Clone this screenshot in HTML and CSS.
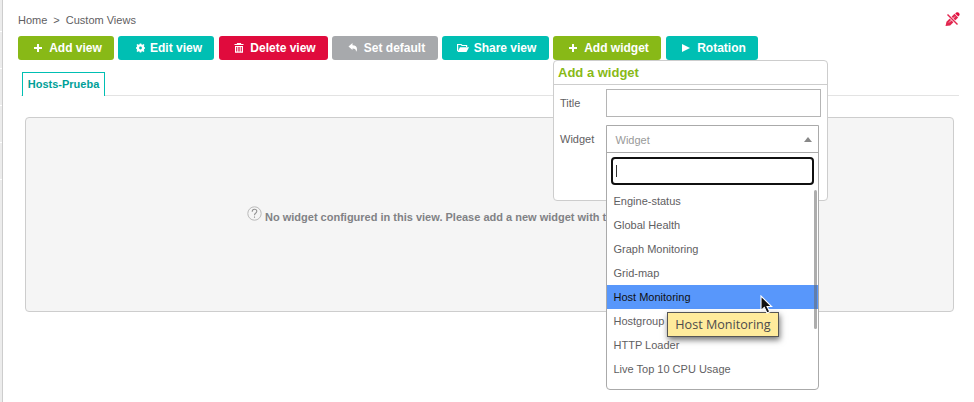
FILE: index.html
```html
<!DOCTYPE html>
<html lang="en">
<head>
<meta charset="utf-8">
<title>Custom Views</title>
<link rel="stylesheet" href="styles.css">
</head>
<body>
<div class="app">
  <aside class="rail"><i></i><i></i><i></i><i></i><i></i></aside>
  <main class="page">
    <header class="topline">
      <nav class="breadcrumb"><a>Home</a><span class="sep">&gt;</span><a>Custom Views</a></nav>
      <svg class="edit-off" viewBox="0 0 15 15" width="15" height="15"><path d="M0.500 14l1-4.200 8-8 3.700 3.700-8 8z" fill="#e2264f"/><path d="M10.200 1.400l1-1q2-.8 3 .8t-.3 2.600l-.6.6z" fill="#e00b3d"/><path d="M4 10.500l6-6" stroke="#f9b9c6" stroke-width="1"/><path d="M2.500 2.500l10 10" stroke="#fff" stroke-width="2.600"/><path d="M2.500 2.500l10 10" stroke="#e2264f" stroke-width="1.400"/></svg>
    </header>
    <div class="toolbar">
      <button class="btn green w96"><svg viewBox="0 0 14 12" width="14" height="12"><path d="M3 6h8M7 2v8" stroke="#fff" stroke-width="2"/></svg><span>Add view</span></button>
      <button class="btn teal w96"><svg viewBox="-1.500 0 14 12" width="14" height="12"><circle cx="7" cy="6" r="2.600" fill="none" stroke="#fff" stroke-width="2.400"/><path d="M7 1.500v2M7 8.500v2M2.500 6h2M9.500 6h2M3.500 2.500l1.500 1.500M9 8l1.500 1.500M3.500 9.500l1.500-1.500M9 4l1.500-1.500" stroke="#fff" stroke-width="1.600"/></svg><span>Edit view</span></button>
      <button class="btn red w109"><svg viewBox="0 0 14 12" width="14" height="12"><path d="M2.500 2.500h9M5.500 2V1.500h3V2" stroke="#fff" stroke-width="1.200" fill="none"/><path d="M3.600 4.500v5.700h6.800V4.500z" fill="none" stroke="#fff" stroke-width="1.200"/><path d="M5.800 4v6M8.200 4v6" stroke="#fff" stroke-width="1.100"/></svg><span>Delete view</span></button>
      <button class="btn gray w106"><svg viewBox="0 0 14 12" width="14" height="12"><path d="M2.500 4.500l4-3.500v2.300q4.500.2 4.500 4 0 1.500-1 2.500 .2-3.300-3.500-3.300V8z" fill="#fff"/></svg><span>Set default</span></button>
      <button class="btn teal w107"><svg viewBox="0 0 14 12" width="14" height="12"><path d="M1.600 9V2.500h3.500l1 1h4.500V5" fill="none" stroke="#fff" stroke-width="1.200"/><path d="M4 5.300h9L10.500 10H1.500z" fill="#fff"/></svg><span>Share view</span></button>
      <div class="dropdown">
        <button class="btn green w108"><svg viewBox="0 0 14 12" width="14" height="12"><path d="M3 6h8M7 2v8" stroke="#fff" stroke-width="2"/></svg><span>Add widget</span></button>
        <section class="popup">
          <h2>Add a widget</h2>
          <div class="form">
            <label>Title</label><div class="text-input"></div>
            <label>Widget</label>
            <div class="select">
              <div class="select-head"><span>Widget</span><i class="arrow"></i></div>
              <div class="search"><i class="caret"></i></div>
              <div class="listing">
                <ul>
                  <li>Engine-status</li>
                  <li>Global Health</li>
                  <li>Graph Monitoring</li>
                  <li>Grid-map</li>
                  <li class="active">Host Monitoring</li>
                  <li>Hostgroup</li>
                  <li>HTTP Loader</li>
                  <li>Live Top 10 CPU Usage</li>
                </ul>
                <i class="thumb"></i>
                <div class="tooltip">Host Monitoring</div>
                <svg class="cursor" viewBox="0 0 16 20" width="16" height="20"><path d="M2 1v14.500l3.300-3 2.700 5.500 2.800-1.300-2.700-5.200h4.500z" fill="#111" stroke="#fff" stroke-width="1.100"/></svg>
              </div>
            </div>
          </div>
        </section>
      </div>
      <button class="btn teal w92"><svg viewBox="0 0 14 12" width="14" height="12"><path d="M3 2l8 4-8 4z" fill="#fff"/></svg><span>Rotation</span></button>
    </div>
    <div class="tabs"><div class="tab">Hosts-Prueba</div></div>
    <section class="empty">
      <svg viewBox="0 0 15 15" width="15" height="15"><circle cx="7.500" cy="7.500" r="6.700" fill="none" stroke="#b9b9b9"/><path d="M5.200 5.700q0-2.400 2.300-2.400t2.300 2q0 1.200-1.200 2-1.100.7-1.100 1.900M7.500 10.500v1.300" fill="none" stroke="#929292" stroke-width="1.100"/></svg>
      <p>No widget configured in this view. Please add a new widget with t</p>
    </section>
  </main>
</div>
</body>
</html>
```
FILE: styles.css
```css
* { box-sizing: border-box; }
body { margin: 0; background: #fff; color: #5f6062; font: 11px "Liberation Sans", Arial, sans-serif; overflow: hidden; }
.app { display: flex; height: 402px; }
.rail { width: 3px; flex: none; background: #ececec; border-right: 1px solid #cdcdcd; display: flex; flex-direction: column; padding-top: 31px; gap: 36px; }
.rail i { height: 1px; background: #fff; }
.page { flex: 1; min-width: 0; }
.topline { height: 36px; display: flex; justify-content: space-between; padding: 12px 14px 0 15px; }
.breadcrumb { line-height: 16px; }
.sep { margin: 0 6px; }
.toolbar { display: flex; height: 24px; padding-left: 15px; }
.btn { height: 24px; margin: 0 4px 0 0; padding: 0 0 0 1px; border: 0; border-radius: 3px; color: #fff; font: bold 12px "Liberation Sans", Arial, sans-serif; display: flex; align-items: center; justify-content: center; gap: 4px; white-space: nowrap; }
.btn svg { flex: none; }
.green { background: #88b917; }
.teal { background: #00bfb3; }
.red { background: #e00b3d; }
.gray { background: #a7a9ac; }
.w96 { width: 96px; }
.w96.teal { margin-right: 5px; padding-left: 2px; }
.w109 { width: 109px; }
.w106 { width: 106px; }
.w107 { width: 107px; }
.w108 { width: 108px; margin-right: 5px; }
.w92 { width: 92px; }
.dropdown { position: relative; }
.popup { position: absolute; z-index: 2; top: 24px; left: 0; width: 275px; height: 141px; background: #fff; border: 1px solid #cdcdcd; border-radius: 4px; }
.popup h2 { margin: 0; height: 24px; border-bottom: 1px solid #cdcdcd; padding-left: 4px; color: #88b917; font-size: 13px; line-height: 23px; }
.form { display: grid; grid-template-columns: 46px 215px; grid-template-rows: 28px 28px; row-gap: 8px; padding: 4px 0 0 6px; }
.form label { line-height: 28px; }
.text-input { height: 28px; border: 1px solid #b5b5b5; }
.select { width: 213px; height: 265px; border: 1px solid #aaa; border-radius: 0 0 4px 4px; background: #fff; }
.select-head { height: 27px; border-bottom: 1px solid #aaa; display: flex; justify-content: space-between; align-items: center; padding: 2px 6px 0 8.5px; color: #999; }
.arrow { border: 4px solid transparent; border-bottom: 5px solid #888; border-top: 0; margin-bottom: 2px; }
.search { margin: 4px; height: 28px; border: 2px solid #101010; border-radius: 4px; padding: 6px 3px; }
.caret { display: block; width: 1px; height: 12px; background: #333; }
.listing { position: relative; }
.listing ul { margin: 0; padding: 0; list-style: none; }
.listing li { height: 24px; line-height: 24px; padding-left: 6.5px; }
.listing .active { background: #5897fb; color: #111; }
.thumb { position: absolute; right: 1px; top: 1px; width: 3px; height: 139px; border-radius: 2px; background: rgba(105,105,105,.55); }
.tooltip { position: absolute; left: 60px; top: 123px; width: 112px; height: 25px; border: 1px solid #555; background: #ffeb9c; color: #4c4c4c; font: 12.6px/23px "Open Sans", "Noto Sans", sans-serif; text-align: center; white-space: nowrap; box-shadow: 1px 3px 6px rgba(0,0,0,.55); }
.cursor { position: absolute; left: 152px; top: 106px; }
.tabs { margin: 12px 15px 0 18px; height: 24px; border-bottom: 1px solid #e3e3e3; padding-left: 1px; }
.tab { width: 83px; height: 24px; border: 1px solid #00bfb3; border-bottom: 0; background: #fff; color: #009f98; font-weight: bold; line-height: 23px; text-align: center; }
.empty { margin: 21px 20px 0 22px; height: 195px; border: 1px solid #cdcdcd; border-radius: 4px; background: #f5f5f5; display: flex; align-items: flex-start; padding: 88px 0 0 221px; color: #818285; font-weight: bold; white-space: nowrap; overflow: hidden; }
.empty p { margin: 5px 0 0 3px; line-height: 13px; }
```
